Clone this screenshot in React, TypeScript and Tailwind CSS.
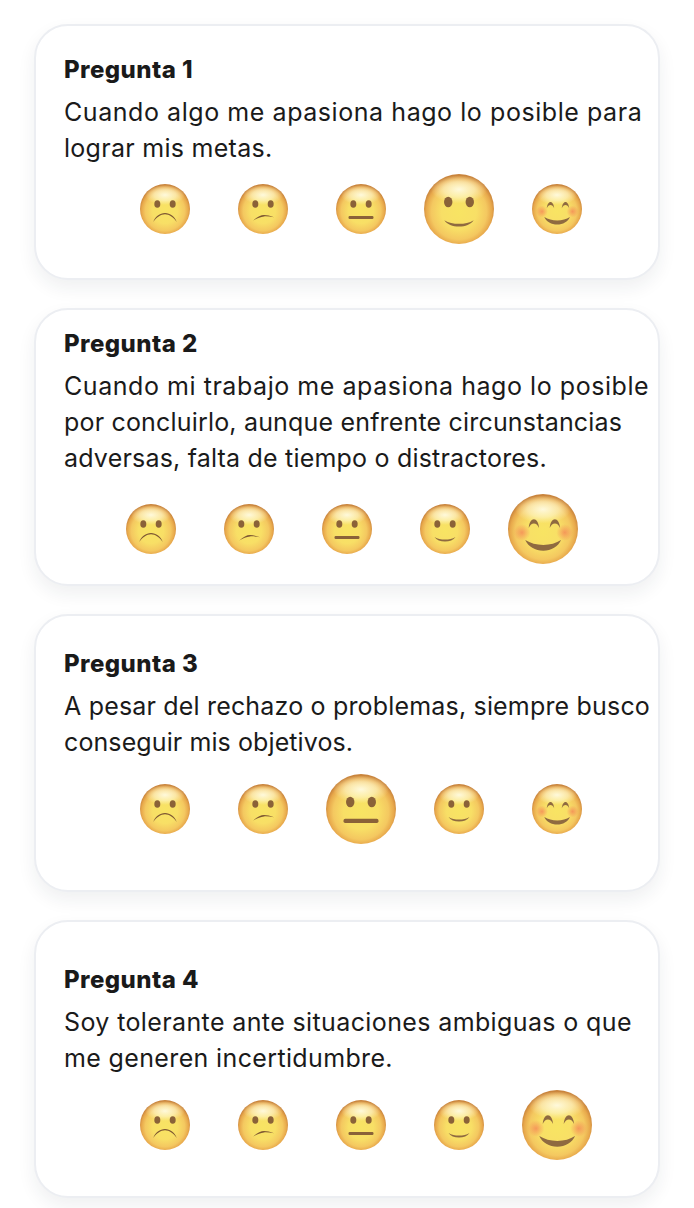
import { useId } from 'react'

type Mood = 0 | 1 | 2 | 3 | 4

const Eyes = () => (
  <>
    <ellipse cx="17.3" cy="20" rx="3" ry="3.8" fill="#8a6238" />
    <ellipse cx="32.7" cy="20" rx="3" ry="3.8" fill="#8a6238" />
  </>
)

const Face = ({ mood, big }: { mood: Mood; big: boolean }) => {
  const id = useId().replace(/[^a-zA-Z0-9]/g, '')
  return (
    <svg viewBox="0 0 50 50" className={big ? 'h-[70px] w-[70px] shrink-0' : 'h-[50px] w-[50px] shrink-0'}>
      <defs>
        <radialGradient id={`${id}f`} cx="50%" cy="54%" r="52%">
          <stop offset="0%" stopColor="#f8e463" />
          <stop offset="48%" stopColor="#f8df66" />
          <stop offset="76%" stopColor="#f4c860" />
          <stop offset="90%" stopColor="#e8a94c" />
          <stop offset="100%" stopColor="#c9843c" />
        </radialGradient>
        <radialGradient id={`${id}h`}>
          <stop offset="0%" stopColor="#fffbe2" stopOpacity="0.95" />
          <stop offset="55%" stopColor="#fff8d0" stopOpacity="0.6" />
          <stop offset="100%" stopColor="#fff6c0" stopOpacity="0" />
        </radialGradient>
        <radialGradient id={`${id}b`}>
          <stop offset="0%" stopColor="#f47f55" stopOpacity="0.7" />
          <stop offset="100%" stopColor="#f47f55" stopOpacity="0" />
        </radialGradient>
      </defs>
      <circle cx="25" cy="25" r="25" fill={`url(#${id}f)`} />
      <ellipse cx="25" cy="11" rx="20" ry="10" fill={`url(#${id}h)`} />
      {mood === 0 && (
        <>
          <Eyes />
          <path d="M13.300 38C15 32.500 20 29 25 29s10 3.500 11.700 9C33.500 33.500 29.500 30.300 25 30.300S16.500 33.500 13.300 38Z" fill="#7d5632" />
        </>
      )}
      {mood === 1 && (
        <>
          <Eyes />
          <path d="M15.300 36.500C19 33 23 31 26 31c3 0 6 .8 10 2.200-3.800-.6-7-1-10-.8-3.500.3-7 1.800-10.700 4.100Z" fill="#7d5632" />
        </>
      )}
      {mood === 2 && (
        <>
          <Eyes />
          <rect x="12.500" y="32" width="25" height="3" rx="1.200" fill="#8a6238" />
        </>
      )}
      {mood === 3 && (
        <>
          <Eyes />
          <path d="M14.500 33c3 1.800 6.500 2.600 10.500 2.600s7.500-.8 10.500-2.600c-2 3-6 4.500-10.500 4.500s-8.500-1.500-10.500-4.500Z" fill="#8f6a40" />
        </>
      )}
      {mood === 4 && (
        <>
          <circle cx="10" cy="27.500" r="6" fill={`url(#${id}b)`} />
          <circle cx="40.500" cy="27.500" r="6" fill={`url(#${id}b)`} />
          <path d="M14.800 24.300c.3-4 2-6.300 3.700-6.300s3.400 2.300 3.700 6.300c-1-2.300-2.200-3.300-3.700-3.300s-2.700 1-3.700 3.300Z" fill="#8f6a40" />
          <path d="M29.800 24.300c.3-4 2-6.300 3.700-6.300s3.400 2.300 3.700 6.300c-1-2.300-2.200-3.300-3.700-3.300s-2.700 1-3.700 3.300Z" fill="#8f6a40" />
          <path d="M12.300 32.900c3.700 2.300 8 3.500 12.900 3.500s9.200-1.200 12.700-3.500c-2 4.600-7 7.600-12.700 7.600s-10.900-3-12.900-7.600Z" fill="#8f6a40" />
        </>
      )}
    </svg>
  )
}

type Line = { text: string; track: string }

const preguntas: { title: string; lines: Line[]; picked: Mood; box: string; row: string }[] = [
  {
    title: 'Pregunta 1',
    lines: [
      { text: 'Cuando algo me apasiona hago lo posible para', track: 'tracking-[0.56px]' },
      { text: 'lograr mis metas.', track: 'tracking-[0.28px]' },
    ],
    picked: 3,
    box: 'h-[256px] pt-[26px]',
    row: 'mt-[8px] pl-[28px]',
  },
  {
    title: 'Pregunta 2',
    lines: [
      { text: 'Cuando mi trabajo me apasiona hago lo posible', track: 'tracking-[0.55px]' },
      { text: 'por concluirlo, aunque enfrente circunstancias', track: 'tracking-[0.18px]' },
      { text: 'adversas, falta de tiempo o distractores.', track: 'tracking-[0.2px]' },
    ],
    picked: 4,
    box: 'mt-[28px] h-[278px] pt-[16px]',
    row: 'mt-[18px]',
  },
  {
    title: 'Pregunta 3',
    lines: [
      { text: 'A pesar del rechazo o problemas, siempre busco', track: 'tracking-[0.18px]' },
      { text: 'conseguir mis objetivos.', track: 'tracking-[0.1px]' },
    ],
    picked: 2,
    box: 'mt-[28px] h-[278px] pt-[30px]',
    row: 'mt-[14px] pl-[28px]',
  },
  {
    title: 'Pregunta 4',
    lines: [
      { text: 'Soy tolerante ante situaciones ambiguas o que', track: 'tracking-[0.38px]' },
      { text: 'me generen incertidumbre.', track: 'tracking-[0.36px]' },
    ],
    picked: 4,
    box: 'mt-[28px] h-[278px] pt-[40px]',
    row: 'mt-[14px] pl-[28px]',
  },
]

const moods: Mood[] = [0, 1, 2, 3, 4]

export default function App() {
  return (
    <div className="min-h-[1208px] bg-white pl-[34px] pt-[24px] font-['Inter',sans-serif] text-[#1a1a1a]">
      {preguntas.map((p) => (
        <section
          key={p.title}
          className={`w-[626px] rounded-[34px] border-2 border-[#eceef2] bg-white pl-[28px] shadow-[0_8px_18px_rgba(30,40,60,0.07)] ${p.box}`}
        >
          <h2 className="text-[24px] leading-[36px] font-extrabold tracking-[0.45px]">{p.title}</h2>
          <p className="mt-[6px] text-[25px] leading-[36px] whitespace-nowrap">
            {p.lines.map((line) => (
              <span key={line.text} className={`block ${line.track}`}>{line.text}</span>
            ))}
          </p>
          <div className={`-ml-[28px] flex h-[70px] items-center justify-center ${p.row}`}>
            {moods.map((m) => (
              <div key={m} className="flex w-[98px] justify-center">
                <Face mood={m} big={m === p.picked} />
              </div>
            ))}
          </div>
        </section>
      ))}
    </div>
  )
}
